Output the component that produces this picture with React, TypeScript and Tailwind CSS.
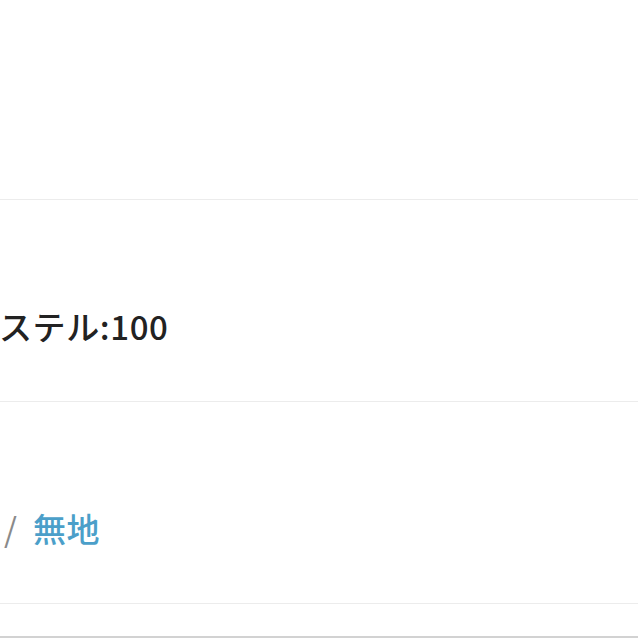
import React from "react"

const rows = [
  { label: "ステル:100", kind: "plain" },
  { label: "無地", kind: "link" },
]

const App = () => {
  return (
    <div
      className="w-[638px] h-[638px] overflow-hidden bg-white"
      style={{ fontFamily: '"Noto Sans CJK JP", "Noto Sans", sans-serif' }}
    >
      {/* top blank row */}
      <div className="h-[200px] border-b border-[#ececec]"></div>

      {/* options */}
      <div className="h-[202px] border-b border-[#ececec] pt-[102px]">
        <p className="ml-[-1px] whitespace-nowrap text-[33px] leading-[48px] tracking-[0.6px] text-[#222] font-medium">
          {rows[0].label}
        </p>
      </div>
      <div className="h-[202px] border-b border-[#ececec] pt-[102px]">
        <p className="ml-[4px] whitespace-nowrap text-[33px] leading-[48px] font-medium">
          <span className="text-[#8a8a8a] font-normal">/</span>
          <span className="ml-[16px] tracking-[0.5px] text-[#4b9fc9]">{rows[1].label}</span>
        </p>
      </div>

      <div className="h-[34px] border-b-2 border-[#d2d2d2]"></div>
    </div>
  )
}

export default App
